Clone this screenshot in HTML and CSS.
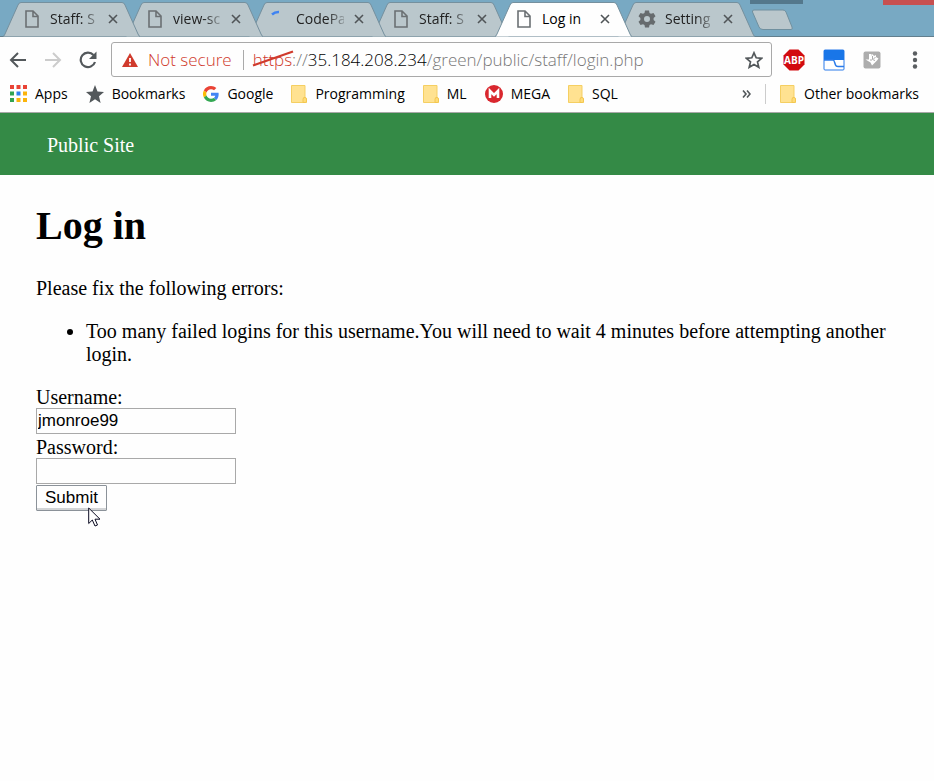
FILE: index.html
```html
<!DOCTYPE html>
<html lang="en">
<head>
<meta charset="utf-8">
<title>Log in</title>
<link rel="stylesheet" href="styles.css">
</head>
<body>
<svg class="defs" aria-hidden="true">
  <symbol id="tab" viewBox="0 0 137 37"><path d="M0 36.500 Q1 36.500 2 34 L15 5 Q16 2.500 18 2.500 H119 Q121 2.500 122 5 L135 34 Q136 36.500 137 36.500"/></symbol>
  <symbol id="file" viewBox="0 0 14 18"><path d="M1 1H8L13 6V17H1Z M8 1V6.500H13" fill="none" stroke="currentColor" stroke-width="1.600"/></symbol>
  <symbol id="close" viewBox="0 0 10 10"><path d="M1 1L9 9M9 1L1 9" stroke="currentColor" stroke-width="1.600"/></symbol>
  <symbol id="folder" viewBox="0 0 16 18"><path d="M.5 .5H14V13.500Q15.500 13 15.500 15V17.500H.5Z" fill="#ffe291" stroke="#f5cf62"/><path d="M14 12.500Q12 12 12 14.500V17.500H14.500Q15.500 17.500 15.500 16V14Q15.500 12.500 14 12.500Z" fill="#ffdc78" stroke="#f3c64f"/></symbol>
</svg>

<nav class="tabs" aria-label="Tabs">
  <div class="tab"><svg class="shape"><use href="#tab"/></svg><svg class="file"><use href="#file"/></svg><span class="title">Staff: S</span><button class="close" aria-label="Close tab"><svg><use href="#close"/></svg></button></div>
  <div class="tab"><svg class="shape"><use href="#tab"/></svg><svg class="file"><use href="#file"/></svg><span class="title">view-sc</span><button class="close" aria-label="Close tab"><svg><use href="#close"/></svg></button></div>
  <div class="tab"><svg class="shape"><use href="#tab"/></svg><svg class="file" viewBox="0 0 14 18"><path d="M1 4.500Q4 1.800 8 2" fill="none" stroke="#3f83f2" stroke-width="2.500"/></svg><span class="title">CodePa</span><button class="close" aria-label="Close tab"><svg><use href="#close"/></svg></button></div>
  <div class="tab"><svg class="shape"><use href="#tab"/></svg><svg class="file"><use href="#file"/></svg><span class="title">Staff: S</span><button class="close" aria-label="Close tab"><svg><use href="#close"/></svg></button></div>
  <div class="tab active"><svg class="shape"><use href="#tab"/></svg><svg class="file"><use href="#file"/></svg><span class="title">Log in</span><button class="close" aria-label="Close tab"><svg><use href="#close"/></svg></button></div>
  <div class="tab"><svg class="shape"><use href="#tab"/></svg><svg class="file gear" viewBox="0 0 18 18"><path fill="#666b6e" fill-rule="evenodd" d="M7 .5H11L11.500 3L13 3.800L15.500 3L17.500 6.300L15.600 8V10L17.500 11.700L15.500 15L13 14.200L11.500 15L11 17.500H7L6.500 15L5 14.200L2.500 15L.5 11.700L2.400 10V8L.5 6.300L2.500 3L5 3.800L6.500 3ZM9 6A3 3 0 1 0 9 12A3 3 0 1 0 9 6Z"/></svg><span class="title">Setting</span><button class="close" aria-label="Close tab"><svg><use href="#close"/></svg></button></div>
  <button class="new-tab" aria-label="New tab"><svg viewBox="0 0 43 22"><path d="M3 1H32Q34 1 35 3L41 18Q42 20.500 40 20.500H12Q9 20.500 8 18L1.500 3Q1 1 3 1Z" fill="#bac7cc" stroke="#70909f"/></svg></button>
  <div class="window-buttons"><span class="minimize"></span><span class="quit"></span></div>
</nav>

<div class="toolbar">
  <button aria-label="Back"><svg width="18" height="18" viewBox="0 0 18 18"><path d="M17 9H2M9 2L2 9L9 16" fill="none" stroke="#53585b" stroke-width="2"/></svg></button>
  <button aria-label="Forward"><svg width="18" height="18" viewBox="0 0 18 18"><path d="M1 9H16M9 2L16 9L9 16" fill="none" stroke="#ccc" stroke-width="2"/></svg></button>
  <button aria-label="Reload"><svg width="18" height="18" viewBox="0 0 18 18"><path d="M14.500 4A7.300 7.300 0 1 0 16 11" fill="none" stroke="#53585b" stroke-width="2.200"/><path d="M17.500 .5V8H10Z" fill="#53585b"/></svg></button>
  <div class="omnibox">
    <svg class="warning" width="16" height="14" viewBox="0 0 16 14"><path d="M8 0L16 14H0Z" fill="#d03a2c"/><path d="M8 5V9M8 10.500V12.500" stroke="#fff" stroke-width="1.800"/></svg>
    <span class="insecure">Not secure</span>
    <div class="url" role="textbox" aria-label="Address"><span class="scheme">https<svg viewBox="0 0 42 17"><path d="M1 15.500L41 1.500" stroke="#d03a2c" stroke-width="2.200"/></svg></span>://<b>35.184.208.234</b>/green/public/staff/login.php</div>
    <button aria-label="Bookmark this page"><svg width="18" height="18" viewBox="0 0 18 18"><path d="M9 1.800L11.200 6.800L16.700 7.300L12.500 10.900L13.800 16.300L9 13.400L4.200 16.300L5.500 10.900L1.300 7.300L6.800 6.800Z" fill="none" stroke="#53585b" stroke-width="1.700"/></svg></button>
  </div>
  <div class="extensions">
    <button aria-label="Adblock Plus"><svg width="22" height="22" viewBox="0 0 22 22"><path d="M6.500 .5H15.500L21.500 6.500V15.500L15.500 21.500H6.500L.5 15.500V6.500Z" fill="#d20a0f"/><text x="11" y="14.500" class="abp">ABP</text></svg></button>
    <button aria-label="Extension"><svg width="22" height="22" viewBox="0 0 22 22"><rect x="1" y="1" width="20" height="20" rx="1" fill="#fff" stroke="#2a7bea"/><path d="M1 1H21V11H1Z" fill="#1976e8"/><path d="M1 11H10Q11 11 11.500 13L12.500 16Q13 17.500 15 17.500H21" fill="none" stroke="#2a7bea" stroke-width="1.500"/></svg></button>
    <button aria-label="Downloads extension"><svg width="18" height="18" viewBox="0 0 18 18"><rect x=".5" y=".5" width="17" height="17" rx="2" fill="#adadad"/><path d="M6 3H8.500V5L9.500 3L11 5L13 4V6L15.500 7.500L14 9.500L9 14.500L7.500 11.500L2.500 8.500H6Z" fill="#fff"/><path d="M9.500 5V8.500L12 9.500M12.500 6.500L10.500 7.500M7 9H9" fill="none" stroke="#adadad"/></svg></button>
    <button class="menu" aria-label="Menu"><svg width="6" height="18" viewBox="0 0 6 18"><g fill="#5a5e61"><circle cx="3" cy="2.500" r="2.200"/><circle cx="3" cy="9" r="2.200"/><circle cx="3" cy="15.500" r="2.200"/></g></svg></button>
  </div>
</div>

<nav class="bookmarks" aria-label="Bookmarks">
  <a href="#"><svg width="17" height="17" viewBox="0 0 17 17"><path d="M0 0h4v4h-4zM6.500 0h4v4h-4zM13 0h4v4h-4z" fill="#e94335"/><path d="M0 6.500h4v4h-4zM0 13h4v4h-4z" fill="#32a352"/><path d="M6.500 6.500h4v4h-4z" fill="#2f80f0"/><path d="M13 6.500h4v4h-4zM6.500 13h4v4h-4zM13 13h4v4h-4z" fill="#fbb40b"/></svg>Apps</a>
  <a href="#"><svg width="18" height="18" viewBox="0 0 18 18"><path d="M9 0L11.500 6.400L18 7L13 11.300L14.600 18L9 14.300L3.400 18L5 11.300L0 7L6.500 6.400Z" fill="#53585b"/></svg>Bookmarks</a>
  <a href="#"><svg width="16" height="16" viewBox="0 0 48 48"><path fill="#ea4335" d="M24 9.500c3.540 0 6.710 1.220 9.210 3.600l6.850-6.850C35.900 2.380 30.470 0 24 0 14.620 0 6.510 5.380 2.560 13.220l7.980 6.190C12.430 13.720 17.740 9.500 24 9.500z"/><path fill="#4285f4" d="M46.980 24.550c0-1.570-.15-3.090-.38-4.550H24v9.020h12.940c-.58 2.960-2.260 5.480-4.780 7.180l7.730 6c4.510-4.180 7.090-10.360 7.090-17.650z"/><path fill="#fbbc05" d="M10.530 28.590A14.500 14.500 0 0 1 10.530 19.410L2.560 13.220a24 24 0 0 0 0 21.560z"/><path fill="#34a853" d="M24 48c6.480 0 11.930-2.130 15.890-5.810l-7.730-6c-2.150 1.450-4.920 2.300-8.160 2.300-6.260 0-11.570-4.220-13.470-9.910l-7.980 6.190C6.510 42.620 14.620 48 24 48z"/></svg>Google</a>
  <a href="#"><svg class="folder"><use href="#folder"/></svg>Programming</a>
  <a href="#"><svg class="folder"><use href="#folder"/></svg>ML</a>
  <a href="#"><svg width="18" height="18" viewBox="0 0 18 18"><circle cx="9" cy="9" r="9" fill="#d9272e"/><path d="M5 13V6L9 10L13 6V13" fill="none" stroke="#fff" stroke-width="2.600"/></svg>MEGA</a>
  <a href="#"><svg class="folder"><use href="#folder"/></svg>SQL</a>
  <button class="more" aria-label="More bookmarks"><svg width="9" height="8" viewBox="0 0 9 8"><path d="M1 .5L4 4L1 7.500M5 .5L8 4L5 7.500" fill="none" stroke="#53585b" stroke-width="1.600"/></svg></button>
  <a href="#" class="other"><svg class="folder"><use href="#folder"/></svg>Other bookmarks</a>
</nav>

<header class="site-header"><a href="#">Public Site</a></header>

<main>
  <h1>Log in</h1>
  <p>Please fix the following errors:</p>
  <ul>
    <li>Too many failed logins for this username.You will need to wait 4 minutes before attempting another login.</li>
  </ul>
  <form>
    <label for="username">Username:</label>
    <input id="username" type="text" value="jmonroe99">
    <label for="password">Password:</label>
    <input id="password" type="password">
    <div class="submit-row">
      <button type="button">Submit</button>
      <svg class="pointer" viewBox="0 0 13 20"><path d="M.7 1V16.500L4.300 13L7 19L9.500 18L7 12.200H12Z" fill="#fff" stroke="#0b0b22"/></svg>
    </div>
  </form>
</main>
</body>
</html>
```
FILE: styles.css
```css
* { box-sizing: border-box; }

body {
  margin: 0;
  background: #fefefe;
  color: #000;
  font: 20px/23px "Liberation Serif", serif;
}

svg { display: block; flex: none; }
.defs { display: none; }

button {
  padding: 0;
  border: 0;
  background: none;
  color: inherit;
  font: inherit;
}

a { color: inherit; text-decoration: none; }

.tabs,
.toolbar,
.bookmarks {
  display: flex;
  align-items: center;
  font-family: "Open Sans", sans-serif;
  white-space: nowrap;
}

/* Tab strip */
.tabs {
  position: relative;
  height: 37px;
  padding-left: 3px;
  overflow: hidden;
  background: #78a9c3;
  box-shadow: inset 0 -1px #627f8e;
  font-size: 14px;
}

.tab {
  position: relative;
  display: flex;
  flex: none;
  align-items: center;
  width: 137px;
  height: 37px;
  margin-right: -14px;
  padding-left: 22px;
  color: #222;
}

.tab:nth-child(1) { z-index: 6; }
.tab:nth-child(2) { z-index: 5; }
.tab:nth-child(3) { z-index: 4; }
.tab:nth-child(4) { z-index: 3; }
.tab:nth-child(5) { z-index: 7; }
.tab:nth-child(6) { z-index: 1; }

.shape {
  position: absolute;
  inset: 0;
  z-index: -1;
  width: 137px;
  height: 37px;
  fill: #bac7cc;
  stroke: #75909e;
}

.active .shape { fill: #fefefe; }

.file {
  width: 14px;
  height: 18px;
  margin-right: 11px;
  color: #6b7073;
}

.gear { width: 18px; margin: 0 9px 0 -2px; }

.title {
  width: 48px;
  -webkit-mask-image: linear-gradient(to right, #000 65%, transparent 110%);
  mask-image: linear-gradient(to right, #000 65%, transparent 110%);
}

.active .title { -webkit-mask-image: none; mask-image: none; color: #000; }

.close { margin-left: 10px; color: #505558; }
.close svg { width: 10px; height: 10px; }

.new-tab { margin-left: 10px; }
.new-tab svg { width: 43px; height: 22px; margin-top: 3px; }

.window-buttons {
  position: absolute;
  top: 0;
  right: 0;
  display: flex;
  justify-content: space-between;
  width: 184px;
}

.minimize { width: 53px; height: 4px; background: #54788c; }
.quit { width: 51px; height: 5px; background: #c75050; }

/* Toolbar */
.toolbar {
  gap: 17px;
  height: 45px;
  padding: 0 16px 0 9px;
}

.omnibox {
  display: flex;
  flex: 1;
  align-items: center;
  height: 35px;
  margin-left: -3px;
  padding: 0 8px 0 10px;
  border: 1px solid #a9a9a9;
  border-radius: 3px;
  font-size: 17px;
  font-weight: 350;
}

.insecure {
  margin: 0 11px 0 10px;
  color: #d03a2c;
}

.url {
  flex: 1;
  padding-left: 9px;
  border-left: 1px solid #aaa;
  line-height: 20px;
  color: #777;
}

.url b { color: #000; font-weight: inherit; }

.scheme { position: relative; color: #d03a2c; }

.scheme svg {
  position: absolute;
  top: 2px;
  left: -1px;
  width: 42px;
  height: 17px;
}

.extensions {
  display: flex;
  align-items: center;
  gap: 18px;
  margin-left: -6px;
}

.extensions .menu { margin-left: 13px; }

.abp {
  fill: #fff;
  font: bold 10px "Open Sans", sans-serif;
  text-anchor: middle;
}

/* Bookmarks bar */
.bookmarks {
  gap: 18px;
  height: 31px;
  padding: 0 15px 7px 10px;
  border-bottom: 1px solid #a8a8a8;
  font-size: 14px;
  line-height: 20px;
}

.bookmarks a { display: flex; align-items: center; gap: 8px; }
.folder { width: 16px; height: 18px; }
.more { margin-left: auto; }

.other {
  margin-left: -4px;
  padding-left: 14px;
  border-left: 1px solid #ccc;
}

/* Page */
.site-header {
  padding: 21px 47px 18px;
  background: #348a46;
  color: #fff;
}

main { padding: 28px 36px; }

h1 {
  margin: 0 0 28px;
  font-size: 40px;
  line-height: 46px;
}

p { margin: 0 0 20px; }
ul { margin: 0 0 20px; padding-left: 50px; }

form {
  display: flex;
  flex-direction: column;
  align-items: flex-start;
}

label { line-height: 22px; }

input {
  width: 200px;
  height: 26px;
  margin-bottom: 2px;
  padding: 1px;
  border: 1px solid #a9a9a9;
  background: #fefefe;
  font: 17px "Liberation Sans", sans-serif;
}

.submit-row { position: relative; margin-top: -1px; }

.submit-row button {
  height: 26px;
  padding: 0 8px;
  border: 1px solid #8b9299;
  border-radius: 1px;
  box-shadow: inset 0 -2px #d2d4d6;
  font: 17px "Liberation Sans", sans-serif;
}

.pointer {
  position: absolute;
  top: 22px;
  left: 52px;
  width: 13px;
  height: 20px;
}
```
